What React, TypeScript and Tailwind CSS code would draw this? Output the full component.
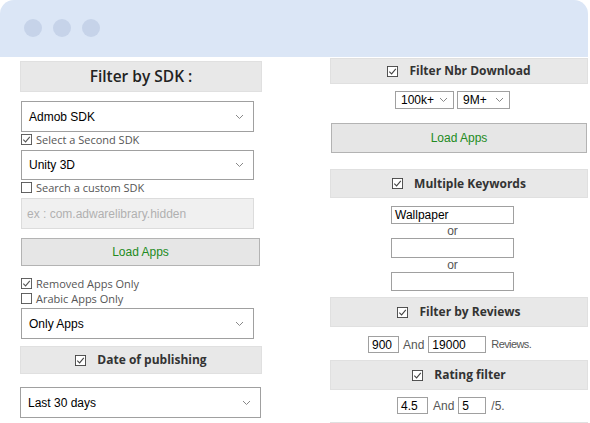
import React from "react";

const CheckIcon = ({ size = 11, color = "#555" }: { size?: number; color?: string }) => (
  <svg width={size} height={size} viewBox="0 0 12 12" className="shrink-0">
    <rect x="0.5" y="0.5" width="11" height="11" fill="white" stroke={color} strokeWidth="1" />
    <path d="M2.5 6.2 L5 8.6 L9.6 3.2" fill="none" stroke={color} strokeWidth="1.2" />
  </svg>
);

const EmptyBox = ({ size = 11, color = "#555" }: { size?: number; color?: string }) => (
  <svg width={size} height={size} viewBox="0 0 12 12" className="shrink-0">
    <rect x="0.5" y="0.5" width="11" height="11" fill="white" stroke={color} strokeWidth="1" />
  </svg>
);

const Chevron = () => (
  <svg width="9" height="6" viewBox="0 0 9 6" className="shrink-0">
    <path d="M1 1 L4.5 4.5 L8 1" fill="none" stroke="#888" strokeWidth="1" />
  </svg>
);

const Select = ({ label, cls }: { label: string; cls: string }) => (
  <div
    className={`flex items-center justify-between border border-[#a0a0a0] bg-white pl-[7px] pr-[9px] text-[12px] text-black ${cls}`}
    style={{ fontFamily: "'Liberation Sans', Arial, sans-serif" }}
  >
    <span>{label}</span>
    <Chevron />
  </div>
);

const SmallSelect = ({ label, cls }: { label: string; cls: string }) => (
  <div
    className={`flex items-center justify-between border border-[#a0a0a0] bg-white pl-[5px] pr-[5px] text-[12px] text-black ${cls}`}
    style={{ fontFamily: "'Liberation Sans', Arial, sans-serif" }}
  >
    <span>{label}</span>
    <Chevron />
  </div>
);

const CheckRow = ({ label, checked, cls }: { label: string; checked: boolean; cls: string }) => (
  <div
    className={`flex items-center gap-[4px] pl-[1px] text-[11px] leading-none text-[#555] ${cls}`}
    style={{ fontFamily: "'Open Sans', sans-serif" }}
  >
    {checked ? <CheckIcon /> : <EmptyBox />}
    <span>{label}</span>
  </div>
);

const Header = ({ label, cls, checkbox = true }: { label: string; cls: string; checkbox?: boolean }) => (
  <div
    className={`flex items-center justify-center gap-[11px] border border-[#e0e0e0] bg-[#e8e8e8] text-[12px] font-bold text-[#333] ${cls}`}
    style={{ fontFamily: "'Open Sans', sans-serif" }}
  >
    {checkbox && <CheckIcon size={11} color="#444" />}
    <span>{label}</span>
  </div>
);

const Button = ({ cls }: { cls: string }) => (
  <div
    className={`flex items-center justify-center border border-[#b3b3b3] bg-[#e6e6e6] text-[12px] text-[#228b22] ${cls}`}
    style={{ fontFamily: "'Liberation Sans', Arial, sans-serif" }}
  >
    Load Apps
  </div>
);

const TextBox = ({ value, cls }: { value: string; cls: string }) => (
  <div
    className={`flex items-center border border-[#a0a0a0] bg-white pl-[3px] text-[12px] text-black ${cls}`}
    style={{ fontFamily: "'Liberation Sans', Arial, sans-serif" }}
  >
    {value}
  </div>
);

const arial = { fontFamily: "'Liberation Sans', Arial, sans-serif" };

export default function App() {
  return (
    <div className="h-[423px] w-[590px] overflow-hidden bg-white">
      <div className="flex h-[423px] w-[588px] flex-col overflow-hidden rounded-t-[14px] bg-white">
        <div className="flex h-[57px] shrink-0 items-start gap-[11px] bg-[#dbe6f6] pl-[24px] pt-[19px]">
          <div className="h-[18px] w-[18px] rounded-full bg-[#c6d3e9]" />
          <div className="h-[18px] w-[18px] rounded-full bg-[#c6d3e9]" />
          <div className="h-[18px] w-[18px] rounded-full bg-[#c6d3e9]" />
        </div>
        <div className="flex flex-1 items-start pl-[20px]">
          {/* Left column */}
          <div className="flex w-[242px] shrink-0 flex-col pt-[4px]">
            <div
              className="flex h-[31px] items-center justify-center border border-[#e0e0e0] bg-[#e8e8e8] text-[15.5px] font-semibold text-[#222]"
              style={{ fontFamily: "'Open Sans', sans-serif" }}
            >
              Filter by SDK :
            </div>
            <Select label="Admob SDK" cls="ml-px mt-[9px] h-[31px] w-[233px]" />
            <CheckRow label="Select a Second SDK" checked cls="h-[14px]" />
            <Select label="Unity 3D" cls="ml-px mt-[4px] h-[30px] w-[233px]" />
            <CheckRow label="Search a custom SDK" checked={false} cls="h-[12px] mt-px" />
            <div
              className="ml-px mt-[5px] flex h-[31px] w-[233px] items-center border border-[#dcdcdc] bg-[#f0f0f0] pl-[5px] text-[12px] text-[#b0b0b0]"
              style={arial}
            >
              ex : com.adwarelibrary.hidden
            </div>
            <Button cls="ml-px mt-[9px] h-[28px] w-[239px]" />
            <CheckRow label="Removed Apps Only" checked cls="h-[12px] mt-[11px]" />
            <CheckRow label="Arabic Apps Only" checked={false} cls="h-[12px] mt-[3px]" />
            <Select label="Only Apps" cls="ml-px mt-[4px] h-[31px] w-[233px]" />
            <Header label="Date of publishing" cls="mt-[7px] h-[28px]" />
            <Select label="Last 30 days" cls="mt-[13px] h-[31px] w-[241px] pl-[6px]" />
          </div>
          {/* Right column */}
          <div className="ml-[68px] flex w-[258px] shrink-0 flex-col pt-px">
            <Header label="Filter Nbr Download" cls="h-[26px]" />
            <div className="mt-[7px] flex h-[18px] gap-[3px] pl-[65px]">
              <SmallSelect label="100k+" cls="h-[18px] w-[59px]" />
              <SmallSelect label="9M+" cls="h-[18px] w-[53px]" />
            </div>
            <Button cls="ml-px mt-[14px] h-[30px] w-[256px]" />
            <Header label="Multiple Keywords" cls="mt-[16px] h-[29px]" />
            <div className="flex flex-col items-start pl-[61px]">
              <TextBox value="Wallpaper" cls="mt-[8px] h-[18px] w-[123px]" />
              <div className="flex h-[14px] w-[123px] justify-center text-[12px] leading-[14px] text-[#555]" style={arial}>
                or
              </div>
              <TextBox value="" cls="h-[20px] w-[123px]" />
              <div className="flex h-[14px] w-[123px] justify-center text-[12px] leading-[14px] text-[#555]" style={arial}>
                or
              </div>
              <TextBox value="" cls="h-[19px] w-[123px]" />
            </div>
            <Header label="Filter by Reviews" cls="mt-[6px] h-[30px]" />
            <div className="mt-[9px] flex h-[17px] items-center pl-[38px] text-[12px] text-[#555]" style={arial}>
              <TextBox value="900" cls="h-[17px] w-[31px]" />
              <span className="ml-[4px] mr-[4px]">And</span>
              <TextBox value="19000" cls="h-[17px] w-[58px]" />
              <span className="ml-[5px] text-[11px] tracking-[-0.6px]">Reviews.</span>
            </div>
            <Header label="Rating filter" cls="mt-[7px] h-[30px]" />
            <div className="mt-[7px] flex h-[17px] items-center pl-[67px] text-[12px] text-[#555]" style={arial}>
              <TextBox value="4.5" cls="h-[17px] w-[31px]" />
              <span className="ml-[5px] mr-[4px]">And</span>
              <TextBox value="5" cls="h-[17px] w-[28px]" />
              <span className="ml-[5px]">/5.</span>
            </div>
            <Header label="" checkbox={false} cls="mt-[8px] h-[28px]" />
          </div>
        </div>
      </div>
    </div>
  );
}
